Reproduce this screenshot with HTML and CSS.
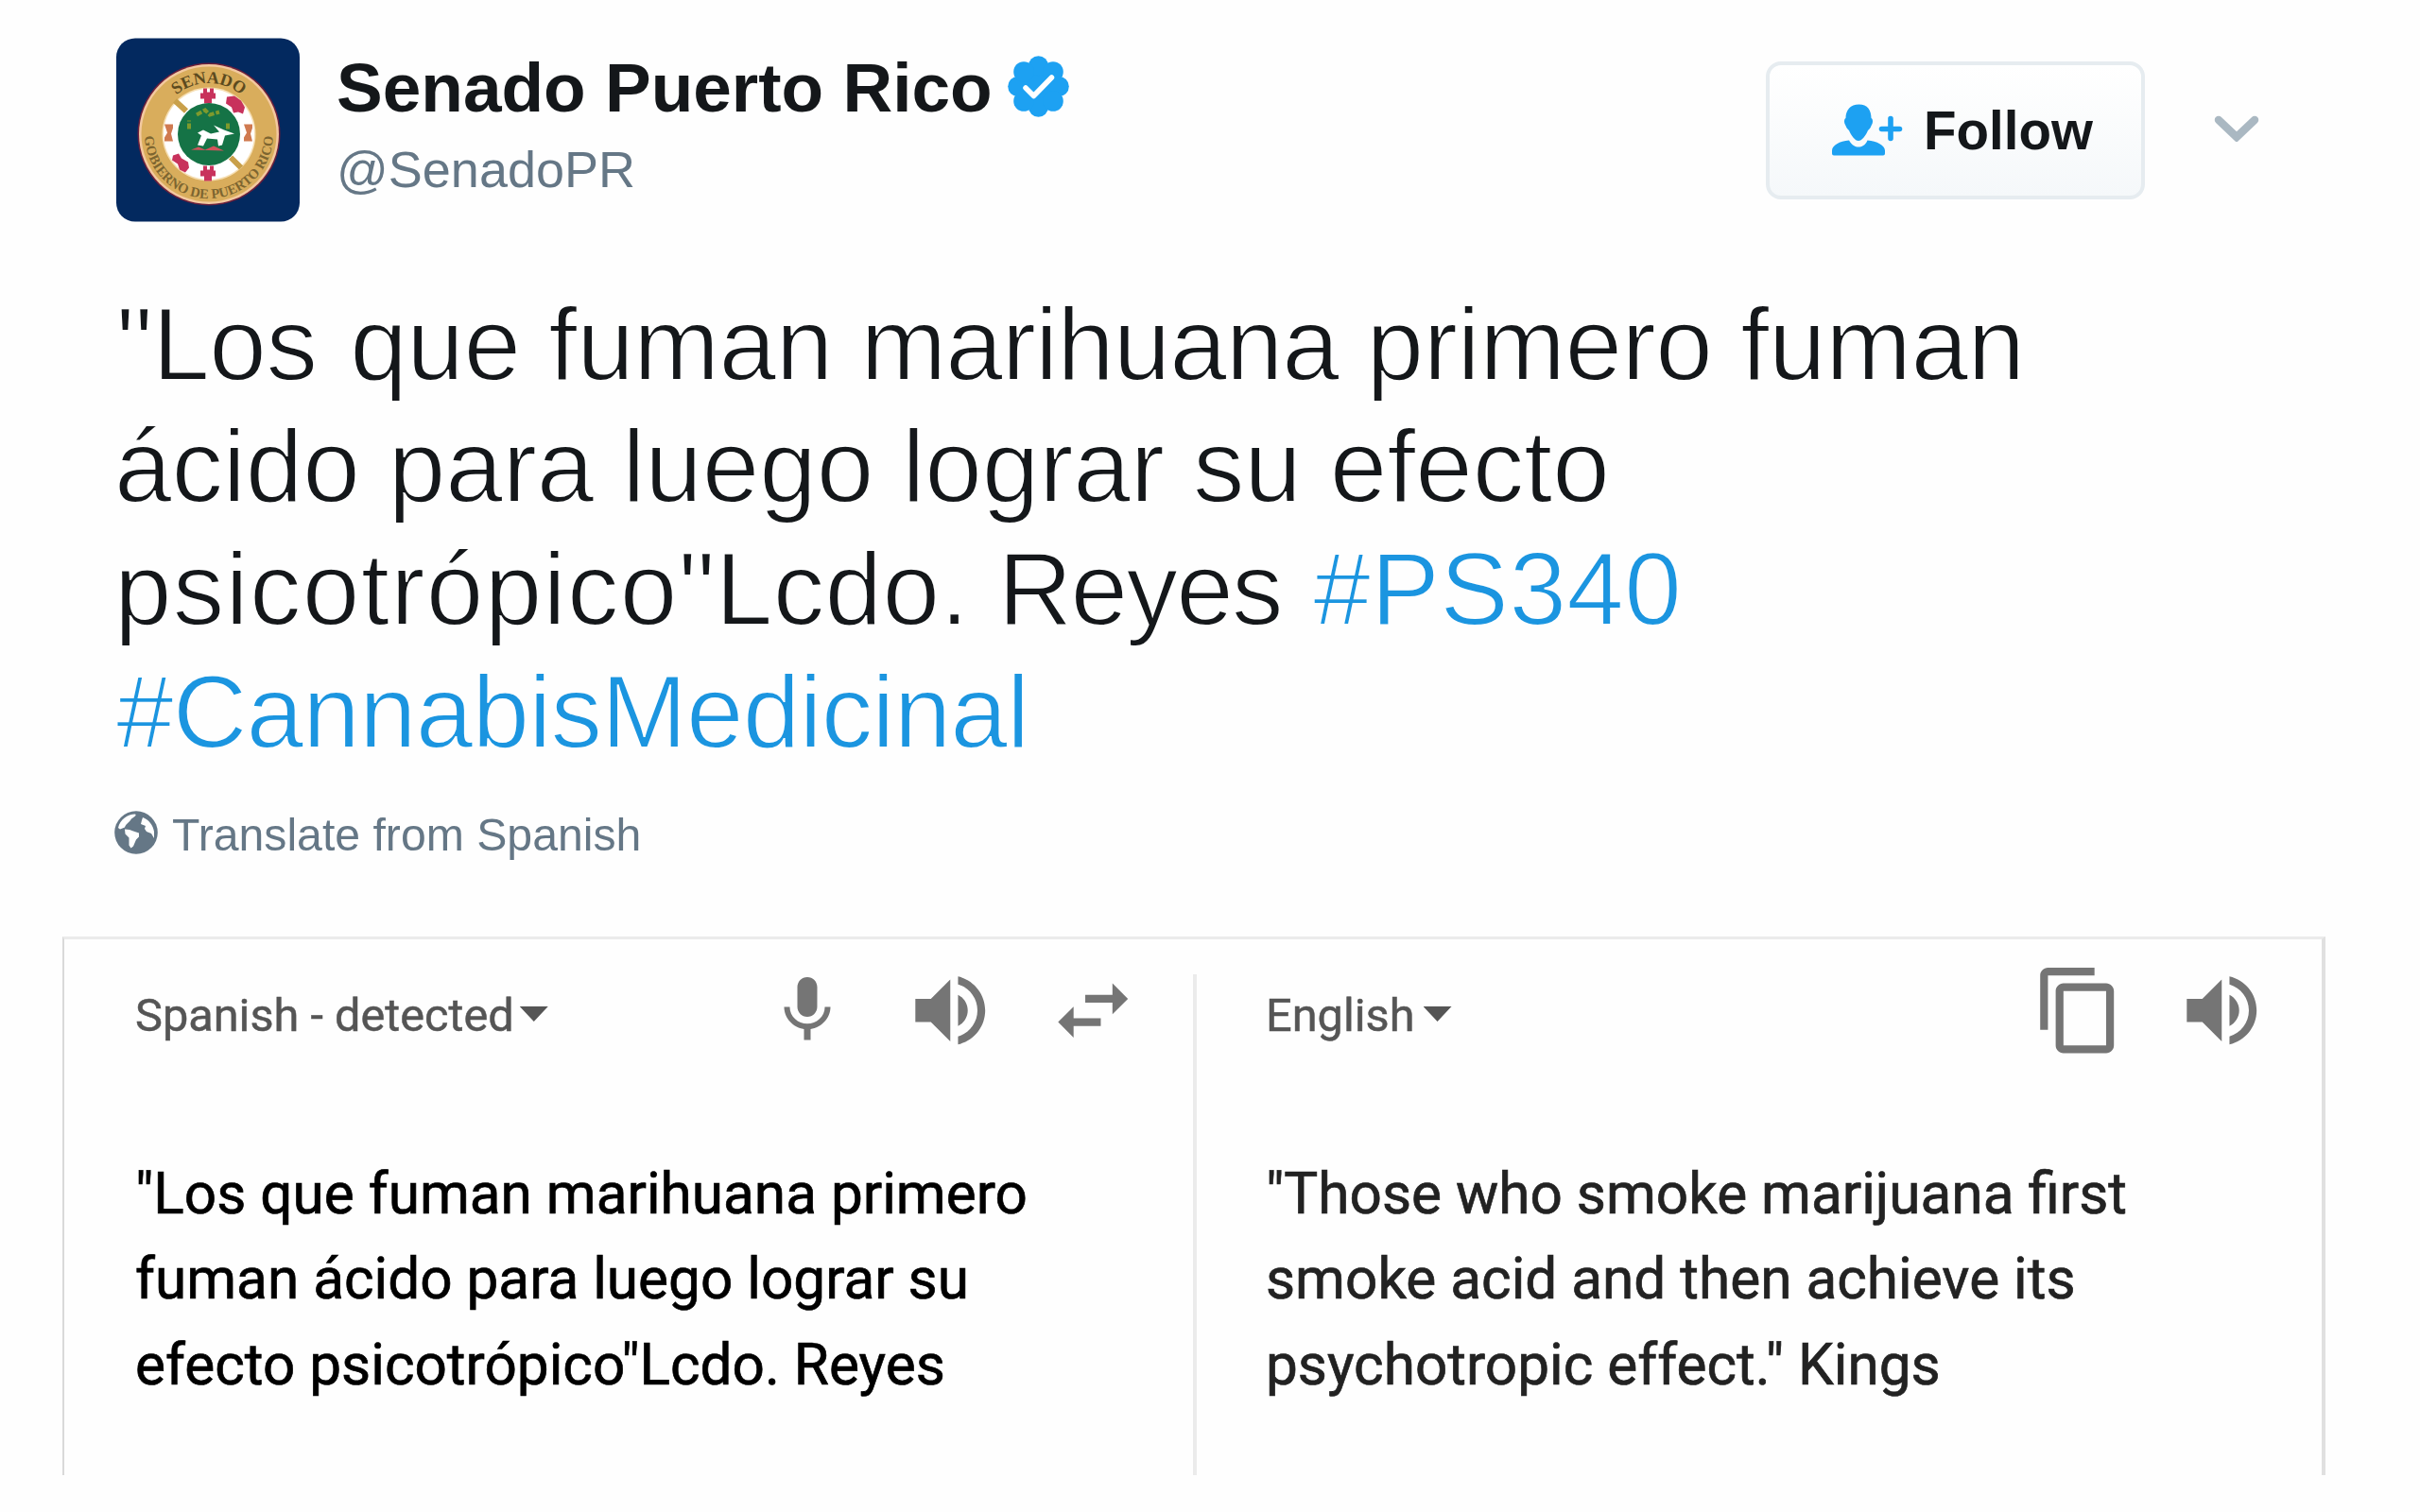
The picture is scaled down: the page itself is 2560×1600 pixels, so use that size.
FILE: index.html
```html
<!DOCTYPE html>
<html lang="es">
<head>
<meta charset="utf-8">
<title>Senado Puerto Rico</title>
<link rel="stylesheet" href="styles.css">
</head>
<body>
<main class="page">
  <article class="tweet">
    <header class="tweet-header">
      <svg class="avatar" viewBox="0 0 194 194" aria-label="Senado Puerto Rico">
        <defs>
          <path id="arc-top" d="M44 101.500A54 54 0 0 1 152 101.500"/>
          <path id="arc-bottom" d="M30 101.500A68 68 0 0 0 166 101.500"/>
        </defs>
        <rect width="194" height="194" rx="20" fill="#03295f"/>
        <circle cx="98" cy="101.500" r="75.500" fill="#6b1f3c"/>
        <circle cx="98" cy="101.500" r="74" fill="#f3c9a0"/>
        <circle cx="98" cy="101.500" r="71.500" fill="#d9ad5c"/>
        <circle cx="98" cy="101.500" r="49.500" fill="#f6dfb4"/>
        <circle cx="98" cy="101.500" r="48" fill="#fff"/>
        <text class="seal-top"><textPath href="#arc-top" startOffset="50%" text-anchor="middle">SENADO</textPath></text>
        <text class="seal-bottom"><textPath href="#arc-bottom" startOffset="50%" text-anchor="middle">GOBIERNO DE PUERTO RICO</textPath></text>
        <g fill="#c8325c">
          <path d="M92 53h4v4h3v-4h4v5h2v6h-4v5h-8v-5h-4v-6h3z"/>
          <path d="M92 135h4v4h3v-4h4v5h2v6h-4v5h-8v-5h-4v-6h3z"/>
          <path d="M117 62l8-1 7 5 4 7-2 7-5-2-5 1-2-6-6-4z"/>
          <path d="M60 124l6-2 3 5 7 4 1 6-4 5-6-3-2-6-6-4z"/>
        </g>
        <g fill="#d07a50"><path d="M51 91h9v4l-2 6 2 8H51v-4l3-5z"/><path d="M135 91h9v4l-2 6 2 8h-9v-4l3-5z"/></g>
        <g stroke="#c9a04a" stroke-width="6"><path d="M62 66l12 11M121 126l11 11"/></g>
        <circle cx="98" cy="101.500" r="33" fill="#157346"/>
        <g fill="none" stroke="#7e9a2d" stroke-width="4"><path d="M77 96v-9M85 81l9-5 5 5 10-3M118 90v8" stroke-dasharray="6 2"/></g>
        <path d="M86 113l4-10-4-3 6-3 8 4 9-2-6-7 11 5 11 4-10 2-3 10-4 1-1-7-11-1-4 8z" fill="#fff"/>
        <path d="M79 118l8-3 7 3 9-4 11 5z" fill="#d2545c"/>
      </svg>
      <div class="identity">
        <div class="name-row">
          <span class="name">Senado Puerto Rico</span>
          <svg class="verified" viewBox="-32.500 -32.500 65 65">
            <g fill="#1da1f2">
              <circle r="25"/>
              <circle cy="-21.800" r="10.500"/><circle cy="21.800" r="10.500"/><circle cx="21.800" r="10.500"/><circle cx="-21.800" r="10.500"/>
              <circle cx="15.500" cy="-15.500" r="10.800"/><circle cx="15.500" cy="15.500" r="10.800"/><circle cx="-15.500" cy="15.500" r="10.800"/><circle cx="-15.500" cy="-15.500" r="10.800"/>
            </g>
            <path d="M-13.500 1.500l8.500 8.500L14-9.500" fill="none" stroke="#fff" stroke-width="5.500" stroke-linecap="round" stroke-linejoin="round"/>
          </svg>
        </div>
        <div class="handle">@SenadoPR</div>
      </div>
      <div class="actions">
        <button class="follow">
          <svg class="follow-icon" viewBox="0 0 76 56">
            <g fill="#1da1f2">
              <path d="M28.500 1.500c-9 0-14 6-14 14.500-2 1-2 5 0 8 1 3 2.500 4 3.500 5 2.500 6 6.500 11 10 11s7.500-5 10-11c1-1 2.500-2 3.500-5 2-3 2-7 0-8 0-8.500-4-14.500-13-14.500z"/>
              <path d="M18 39.500c3.500 5.500 6.500 7 10 7s7-1.500 9.500-7c10 1 18.500 5 18.500 11v3q0 2-2 2H2q-2 0-2-2v-3c0-6 8-10 18-11z"/>
            </g>
            <path d="M62 16.500v21M52.500 27.500h19" fill="none" stroke="#1da1f2" stroke-width="5.600" stroke-linecap="round"/>
          </svg>
          <span>Follow</span>
        </button>
        <svg class="chevron" viewBox="0 0 48 28"><path d="M5 5l19 18L43 5" fill="none" stroke="#aab8c2" stroke-width="8.500" stroke-linecap="round"/></svg>
      </div>
    </header>

    <p class="tweet-text">
      <span class="line line-1"><span class="lead">"Los</span> que fuman <span class="tight">marihuana</span> primero fuman</span>
      <span class="line line-2">ácido para luego lograr su efecto</span>
      <span class="line line-3"><span class="loose">psicotrópico</span>"Lcdo. <span class="tighter">Reyes</span> <a class="tag">#PS340</a></span>
      <span class="line line-4"><a class="tag">#CannabisMedicinal</a></span>
    </p>

    <div class="translate">
      <svg class="globe" viewBox="0 0 46 46">
        <circle cx="23" cy="23" r="22.800" fill="#657786"/>
        <g fill="#fff">
          <path d="M4 18C6 9 14 3.500 22 3.500c2 1-1 3-4 5-2 4-6 5-7 9l-5 2z"/>
          <path d="M11 19.500l5 .5 4 1.500 6 2v4l-3 3-3 7-2.500 2-2-3v-8l-4-4z"/>
          <path d="M30 7c6 2 11 8 12 15v7l-3-5-5-2-2-3 1-3-5-2 1-4z"/>
        </g>
      </svg>
      <span class="translate-label">Translate from Spanish</span>
    </div>
  </article>

  <section class="translator">
    <div class="pane source">
      <div class="toolbar">
        <span class="lang lang-source">Spanish - detected</span><i class="caret"></i>
        <div class="tools tools-source">
          <svg class="icon mic" viewBox="0 0 24 24"><path d="M12 14c1.660 0 2.990-1.340 2.990-3L15 5c0-1.660-1.340-3-3-3S9 3.340 9 5v6c0 1.660 1.340 3 3 3zm5.300-3c0 3-2.540 5.100-5.300 5.100S6.700 14 6.700 11H5c0 3.410 2.720 6.230 6 6.720V21h2v-3.280c3.280-.480 6-3.300 6-6.720h-1.700z"/></svg>
          <svg class="icon" viewBox="0 0 24 24"><path d="M3 9v6h4l5 5V4L7 9H3zm13.500 3c0-1.770-1.020-3.290-2.500-4.030v8.050c1.480-.730 2.500-2.250 2.500-4.020zM14 3.230v2.060c2.890.860 5 3.540 5 6.710s-2.110 5.850-5 6.710v2.060c4.010-.910 7-4.490 7-8.770s-2.990-7.860-7-8.770z"/></svg>
          <svg class="icon" viewBox="0 0 24 24"><path d="M6.990 11L3 15l3.990 4v-3H14v-2H6.990v-3zM21 9l-3.990-4v3H10v2h7.010v3L21 9z"/></svg>
        </div>
      </div>
      <p class="text text-source">
        <span class="line">"Los que fuman marihuana primero</span>
        <span class="line">fuman ácido para luego lograr su</span>
        <span class="line">efecto psicotrópico"Lcdo. Reyes</span>
      </p>
    </div>
    <div class="pane target">
      <div class="toolbar">
        <span class="lang lang-target">English</span><i class="caret"></i>
        <div class="tools tools-target">
          <svg class="icon" viewBox="0 0 24 24"><path d="M16 1H4c-1.100 0-2 .900-2 2v14h2V3h12V1zm3 4H8c-1.100 0-2 .900-2 2v14c0 1.100.900 2 2 2h11c1.100 0 2-.900 2-2V7c0-1.100-.900-2-2-2zm0 16H8V7h11v14z"/></svg>
          <svg class="icon" viewBox="0 0 24 24"><path d="M3 9v6h4l5 5V4L7 9H3zm13.500 3c0-1.770-1.020-3.290-2.500-4.030v8.050c1.480-.730 2.500-2.250 2.500-4.020zM14 3.230v2.060c2.890.860 5 3.540 5 6.710s-2.110 5.850-5 6.710v2.060c4.010-.910 7-4.490 7-8.770s-2.990-7.860-7-8.770z"/></svg>
        </div>
      </div>
      <p class="text text-target">
        <span class="line">"Those who smoke marijuana first</span>
        <span class="line">smoke acid and then achieve its</span>
        <span class="line">psychotropic effect." Kings</span>
      </p>
    </div>
  </section>
</main>
</body>
</html>
```

FILE: styles.css
```css
* { box-sizing: border-box; }
body { margin: 0; background: #fefefe; }
p { margin: 0; }
svg { display: block; flex: none; }

.page {
  width: 2560px;
  height: 1600px;
  overflow: hidden;
  font-family: "Liberation Sans", Arial, sans-serif;
  color: #14171a;
}

/* Tweet */
.tweet { height: 991px; padding: 40px 0 0 123px; }
.tweet-header { display: flex; height: 195px; }
.avatar { width: 194px; height: 195px; }
.seal-top, .seal-bottom { font-family: "Liberation Serif", serif; font-weight: 700; fill: #5c4a1e; }
.seal-top { font-size: 18px; }
.seal-bottom { font-size: 14.5px; fill: #7d6530; }

.identity { padding: 13px 0 0 39px; }
.name-row { display: flex; align-items: center; gap: 16px; height: 80px; }
.name { font-size: 73px; line-height: 80px; font-weight: 700; white-space: nowrap; }
.verified { width: 65px; height: 65px; margin-top: -3px; }
.handle { margin-top: 16px; font-size: 54px; line-height: 60px; color: #657786; }

.actions { display: flex; margin: 25px 170px 0 auto; gap: 73px; }
.follow {
  display: flex;
  align-items: center;
  width: 401px;
  height: 146px;
  padding: 0 0 0 66px;
  border: 4px solid #e6ecf0;
  border-radius: 16px;
  background: linear-gradient(#fff, #f5f8fa);
  color: #14171a;
  font: 700 56.500px/64px "Liberation Sans", Arial, sans-serif;
}
.follow span { padding-top: 2px; }
.follow-icon { width: 76px; height: 56px; margin: -2px 21px 0 0; }
.chevron { width: 48px; height: 28px; margin-top: 57px; }

.line { display: block; white-space: nowrap; }
.tweet-text {
  margin-top: 64.600px;
  font-size: 109px;
  line-height: 129.700px;
  -webkit-text-stroke: 1.900px #fefefe;
}
.tag { color: #1b95e0; }
.line-1 { letter-spacing: -0.500px; }
.line-2 { margin-left: -2px; letter-spacing: -0.180px; }
.line-3 { margin-left: -2px; letter-spacing: 0.350px; }
.line-4 { letter-spacing: -0.900px; }
.lead { margin-right: 5px; }
.tight { letter-spacing: -1.100px; }
.loose { letter-spacing: 1.250px; }
.tighter { letter-spacing: -1.800px; margin-right: 3px; }

.translate { display: flex; align-items: center; margin: 35px 0 0 -2px; height: 60px; }
.globe { width: 46px; height: 46px; margin: -5px 15px 0 0; }
.translate-label { font-size: 48.200px; line-height: 60px; color: #657786; }

/* Translator */
.translator {
  display: flex;
  width: 2394px;
  height: 570px;
  margin-left: 66px;
  border: solid #ebebeb;
  border-width: 3px 4px 0 2px;
  border-color: #ebebeb #e0e0e0 transparent #d9d9d9;
  font-family: Roboto, sans-serif;
}
.pane { padding-top: 26px; }
.source { width: 1194px; padding-left: 75px; }
.target {
  flex: 1;
  margin-top: 37px;
  padding: 0 0 0 73px;
  border-left: 4px solid #ebebeb;
}
.target .toolbar { margin-top: -11px; }
.toolbar { display: flex; align-items: center; height: 98px; color: #555; }
.lang {
  padding-top: 12px;
  font-size: 48.700px;
  line-height: 60px;
  white-space: nowrap;
  -webkit-text-stroke: 0.500px;
}
.caret {
  width: 30px;
  height: 16px;
  margin: 8px 0 0 6px;
  background: #555;
  clip-path: polygon(0 0, 100% 0, 50% 100%);
}
.lang-target + .caret { margin-left: 9px; }
.tools { display: flex; align-items: center; margin-left: auto; }
.icon { width: 98.500px; height: 98.500px; fill: #757575; }
.mic { width: 84px; height: 84px; }
.tools-source { gap: 52px; margin-right: 57px; }
.tools-source .mic { margin-right: 8px; }
.tools-target { gap: 52px; margin-right: 57px; }

.text {
  margin-top: 101px;
  font-size: 60.300px;
  line-height: 90.400px;
  -webkit-text-stroke: 0.700px;
}
.text-source { color: #000; }
.text-target { color: #222; }
```
